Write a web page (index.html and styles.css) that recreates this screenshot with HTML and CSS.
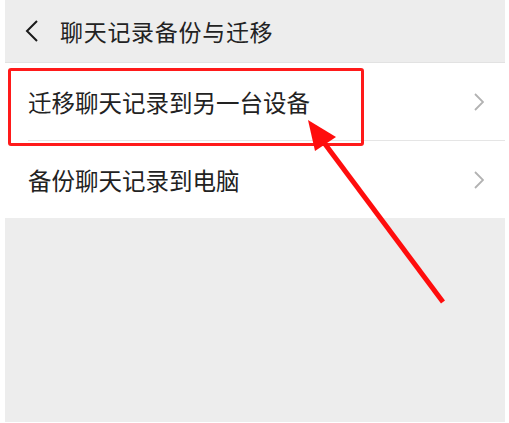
FILE: index.html
```html
<!DOCTYPE html>
<html lang="zh-CN">
<head>
    <meta charset="UTF-8">
    <meta name="viewport" content="width=device-width, initial-scale=1.0">
    <title>聊天记录备份与迁移</title>
    <link rel="stylesheet" href="styles.css">
</head>
<body>
    <div class="screen">
        <div class="nav-bar">
            <svg class="back-icon" width="14" height="24" viewBox="0 0 14 24">
                <path d="M12 2 L2 12 L12 22" fill="none" stroke="#1a1a1a" stroke-width="2"/>
            </svg>
            <span class="nav-title">聊天记录备份与迁移</span>
        </div>

        <div class="menu">
            <div class="menu-item">
                <span class="menu-label">迁移聊天记录到另一台设备</span>
                <svg class="chevron" width="10" height="18" viewBox="0 0 10 18">
                    <path d="M1 1 L9 9 L1 17" fill="none" stroke="#b2b2b2" stroke-width="1.8"/>
                </svg>
            </div>
            <div class="menu-item">
                <span class="menu-label">备份聊天记录到电脑</span>
                <svg class="chevron" width="10" height="18" viewBox="0 0 10 18">
                    <path d="M1 1 L9 9 L1 17" fill="none" stroke="#b2b2b2" stroke-width="1.8"/>
                </svg>
            </div>
        </div>

        <!-- annotation overlay -->
        <div class="highlight-box"></div>
        <svg class="arrow" width="509" height="423" viewBox="0 0 509 423">
            <line x1="443" y1="302" x2="322" y2="140" stroke="#ff0d0d" stroke-width="5"/>
            <polygon points="308,120 315,151 336,137" fill="#ff0d0d"/>
        </svg>
    </div>
</body>
</html>
```

FILE: styles.css
```css
body {
    margin: 0;
    background: #ffffff;
    font-family: "Noto Sans CJK SC", "Noto Sans", sans-serif;
    color: #222222;
}

.screen {
    position: relative;
    margin: 0 4px 1px 5px;
    height: 422px;
    background: #ededed;
}

.nav-bar {
    display: flex;
    align-items: center;
    height: 62px;
    padding-left: 20px;
    border-bottom: 1px solid #e2e2e2;
}

.back-icon {
    margin-right: 21px;
}

.nav-title {
    font-size: 23px;
    letter-spacing: 0.7px;
}

.menu {
    background: #ffffff;
}

.menu-item {
    display: flex;
    align-items: center;
    justify-content: space-between;
    height: 77px;
    margin-left: 23px;
    padding-right: 21px;
    border-bottom: 1px solid #e5e5e5;
}

.menu-item:last-child {
    border-bottom: none;
}

.menu-label {
    font-size: 23.5px;
}

.highlight-box {
    position: absolute;
    left: 3px;
    top: 68px;
    width: 350px;
    height: 72px;
    border: 3px solid #ff1a1a;
    border-radius: 3px;
}

.arrow {
    position: absolute;
    left: -5px;
    top: 0;
}
```
